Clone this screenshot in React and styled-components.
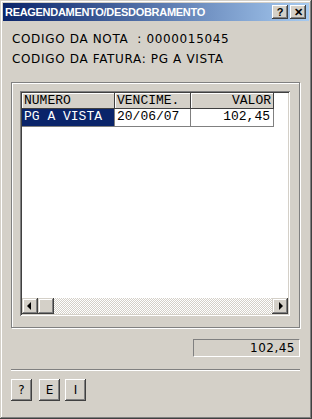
import React from "react";
import styled, { createGlobalStyle } from "styled-components";

const GlobalStyle = createGlobalStyle`
  html, body {
    margin: 0;
    padding: 0;
    background: #d4d0c8;
  }
  * {
    box-sizing: border-box;
  }
`;

const Window = styled.div`
  width: 312px;
  height: 419px;
  background: #d4d0c8;
  padding: 3px;
  display: flex;
  flex-direction: column;
  box-shadow: inset -1px -1px #404040, inset 1px 1px #d4d0c8,
    inset -2px -2px #808080, inset 2px 2px #ffffff;
  font-family: "DejaVu Sans", Verdana, sans-serif;
  color: #000;
`;

const TitleBar = styled.div`
  height: 18px;
  display: flex;
  align-items: center;
  justify-content: space-between;
  padding: 0 3px 0 2px;
  background: linear-gradient(to right, #0a246a, #a6caf0);
`;

const Title = styled.span`
  color: #fff;
  font-family: "Liberation Sans", Arial, sans-serif;
  font-weight: bold;
  font-size: 11px;
  letter-spacing: -0.3px;
`;

const TitleButtons = styled.div`
  display: flex;
  gap: 2px;
`;

const TitleButton = styled.div`
  width: 16px;
  height: 14px;
  background: #d4d0c8;
  box-shadow: inset -1px -1px #404040, inset 1px 1px #ffffff,
    inset -2px -2px #808080;
  display: flex;
  align-items: center;
  justify-content: center;
  font-family: "Liberation Sans", Arial, sans-serif;
  font-weight: bold;
  font-size: 11px;
  line-height: 1;
`;

const Body = styled.div`
  flex: 1;
  display: flex;
  flex-direction: column;
  padding: 8px 9px 0 8px;
`;

const InfoLine = styled.div`
  height: 20px;
  line-height: 20px;
  font-size: 12px;
  letter-spacing: 0.65px;
  padding-left: 1px;
  white-space: pre;
`;

const GroupBox = styled.div`
  margin-top: 13px;
  height: 246px;
  padding: 8px 9px 11px 8px;
  border: 1px solid #808080;
  box-shadow: inset 1px 1px #ffffff, 1px 1px #ffffff;
  display: flex;
`;

const Grid = styled.div`
  flex: 1;
  background: #fff;
  padding: 2px;
  display: flex;
  flex-direction: column;
  box-shadow: inset 1px 1px #808080, inset -1px -1px #ffffff,
    inset 2px 2px #404040, inset -2px -2px #d4d0c8;
  font-family: "Liberation Mono", "Courier New", monospace;
  font-size: 13px;
`;

const Row = styled.div`
  display: flex;
  height: ${(p) => p.h}px;
`;

const HeadCell = styled.div`
  width: ${(p) => p.w}px;
  background: #d4d0c8;
  box-shadow: inset -1px -1px #404040, inset 1px 1px #ffffff;
  padding: 0 3px 0 2px;
  line-height: 15px;
  text-align: ${(p) => p.align || "left"};
`;

const Cell = styled.div`
  width: ${(p) => p.w}px;
  border-right: 1px solid #808080;
  border-bottom: 1px solid #808080;
  padding: 0 3px 0 2px;
  line-height: 16px;
  text-align: ${(p) => p.align || "left"};
  background: ${(p) => (p.selected ? "#0a246a" : "#fff")};
  color: ${(p) => (p.selected ? "#fff" : "#000")};
`;

const Filler = styled.div`
  flex: 1;
`;

const ScrollBar = styled.div`
  height: 16px;
  display: flex;
  background-color: #fff;
  background-image: repeating-conic-gradient(
    #d4d0c8 0 25%,
    #ffffff 0 50%
  );
  background-size: 2px 2px;
`;

const ScrollBtn = styled.div`
  width: 16px;
  height: 16px;
  background: #d4d0c8;
  box-shadow: inset -1px -1px #404040, inset 1px 1px #d4d0c8,
    inset -2px -2px #808080, inset 2px 2px #ffffff;
  display: flex;
  align-items: center;
  justify-content: center;
`;

const Track = styled.div`
  flex: 1;
`;

const TotalRow = styled.div`
  display: flex;
  justify-content: flex-end;
  margin-top: 11px;
`;

const TotalField = styled.div`
  width: 107px;
  height: 18px;
  border-top: 1px solid #808080;
  border-left: 1px solid #808080;
  border-bottom: 1px solid #ffffff;
  border-right: 1px solid #ffffff;
  font-size: 12px;
  letter-spacing: 0.5px;
  line-height: 16px;
  text-align: right;
  padding-right: 4px;
`;

const Separator = styled.div`
  margin-top: 12px;
  height: 2px;
  border-top: 1px solid #808080;
  border-bottom: 1px solid #ffffff;
`;

const ButtonRow = styled.div`
  display: flex;
  margin-top: 8px;
`;

const Button = styled.button`
  width: 21px;
  height: 22px;
  margin-left: ${(p) => p.gap || 0}px;
  padding: 0;
  border: none;
  background: #d4d0c8;
  box-shadow: inset -1px -1px #404040, inset 1px 1px #ffffff,
    inset -2px -2px #808080, inset 2px 2px #d4d0c8;
  font-family: "DejaVu Sans", Verdana, sans-serif;
  font-size: 12px;
  color: #000;
`;

const Arrow = ({ dir }) => (
  <svg width="8" height="8" viewBox="0 0 8 8">
    {dir === "left" ? (
      <polygon points="5,0 1,4 5,8" fill="#000" />
    ) : (
      <polygon points="3,0 7,4 3,8" fill="#000" />
    )}
  </svg>
);

export default function App() {
  return (
    <>
      <GlobalStyle />
      <Window>
        <TitleBar>
          <Title>REAGENDAMENTO/DESDOBRAMENTO</Title>
          <TitleButtons>
            <TitleButton>?</TitleButton>
            <TitleButton>✕</TitleButton>
          </TitleButtons>
        </TitleBar>
        <Body>
          <InfoLine>{"CODIGO DA NOTA  : 0000015045"}</InfoLine>
          <InfoLine>{"CODIGO DA FATURA: PG A VISTA"}</InfoLine>
          <GroupBox>
            <Grid>
              <Row h={16}>
                <HeadCell w={93}>NUMERO</HeadCell>
                <HeadCell w={76}>VENCIME.</HeadCell>
                <HeadCell w={83} align="right">
                  VALOR
                </HeadCell>
              </Row>
              <Row h={18}>
                <Cell w={93} selected>
                  PG A VISTA
                </Cell>
                <Cell w={76}>20/06/07</Cell>
                <Cell w={83} align="right">
                  102,45
                </Cell>
              </Row>
              <Filler />
              <ScrollBar>
                <ScrollBtn>
                  <Arrow dir="left" />
                </ScrollBtn>
                <ScrollBtn />
                <Track />
                <ScrollBtn>
                  <Arrow dir="right" />
                </ScrollBtn>
              </ScrollBar>
            </Grid>
          </GroupBox>
          <TotalRow>
            <TotalField>102,45</TotalField>
          </TotalRow>
          <Separator />
          <ButtonRow>
            <Button>?</Button>
            <Button gap={7}>E</Button>
            <Button gap={5}>I</Button>
          </ButtonRow>
        </Body>
      </Window>
    </>
  );
}
